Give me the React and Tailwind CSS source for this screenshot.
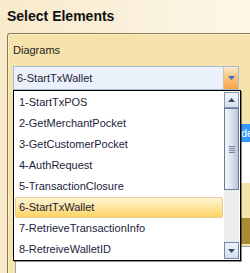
import React from "react";

const items = [
  "1-StartTxPOS",
  "2-GetMerchantPocket",
  "3-GetCustomerPocket",
  "4-AuthRequest",
  "5-TransactionClosure",
  "6-StartTxWallet",
  "7-RetrieveTransactionInfo",
  "8-RetreiveWalletID",
];

function Tri({ dir = "down", color }) {
  return (
    <svg width="7" height="4" viewBox="0 0 7 4">
      {dir === "down" ? (
        <polygon points="0,0 7,0 3.5,4" fill={color} />
      ) : (
        <polygon points="0,4 7,4 3.5,0" fill={color} />
      )}
    </svg>
  );
}

export default function App() {
  return (
    <div
      className="relative w-[250px] h-[273px] overflow-hidden bg-gradient-to-r from-[#f8eacb] to-[#fdf7e8] text-[#111]"
      style={{ fontFamily: '"Liberation Sans", Arial, sans-serif' }}
    >
      <div className="pt-2 pl-[7px] text-[14px] leading-[16px] font-bold text-[#111]">
        Select Elements
      </div>

      <div className="mt-[9px] ml-[7px] w-[260px] h-[260px] border-t border-l border-[#8d7d57] rounded-tl-[3px] bg-[#f5e3ab] shadow-[inset_1px_1px_0_#fbf0cc]">
        <div className="pt-[10px] pl-[5px] flex flex-col">
          <div className="text-[11px] leading-[13px] text-[#1e1e1e]">Diagrams</div>

          <div className="mt-[9px] w-[226px] h-[24px] flex border border-[#a8bed8] bg-[#eaf1fb]">
            <div className="flex-1 flex items-center pl-[3px] text-[11px] leading-[13px] text-[#1e1e38]">
              6-StartTxWallet
            </div>
            <div className="w-[15px] flex items-center justify-center border-l border-[#d9c39d] bg-gradient-to-b from-[#fbe8cc] via-[#f8c27c] to-[#f6a440]">
              <Tri dir="down" color="#3d6fc0" />
            </div>
          </div>

          <div className="mt-[34px] ml-[2px] h-[18px] bg-[#3399ff] flex items-center pl-[226px] text-[11px] leading-[13px] text-white">
            de
          </div>
          <div className="ml-[2px] h-[41px] bg-white" />
          <div className="h-[35px]" />
          <div className="ml-[2px] h-[26px] bg-[#a98b37]" />
          <div className="h-[2px]" />
          <div className="ml-[2px] h-[40px] bg-white border-t border-l border-[#a0a0a0]" />
        </div>
      </div>

      <div className="absolute left-[13px] top-[90px] w-[228px] h-[171px] border border-black bg-white shadow-[1px_1px_0_rgba(0,0,0,0.45)] overflow-hidden">
        <div className="flex h-full">
          <div className="w-[210px] pt-px flex flex-col">
            {items.map((t, i) =>
              i === 5 ? (
                <div
                  key={t}
                  className="h-[21px] mx-px flex items-center pl-[3px] border border-[#e3cd93] rounded-[2px] bg-gradient-to-b from-[#fef5d4] to-[#fdd35d] text-[11px] leading-[13px] text-[#1c1c3c] whitespace-nowrap"
                >
                  {t}
                </div>
              ) : (
                <div
                  key={t}
                  className="h-[21px] flex items-center pl-[5px] text-[11px] leading-[13px] text-[#1c1c3c] whitespace-nowrap"
                >
                  {t}
                </div>
              )
            )}
          </div>
          <div className="w-[15px] my-px flex flex-col bg-[#ededed]">
            <div className="h-[16px] flex items-center justify-center border border-[#8898b4] bg-gradient-to-b from-[#f2f6fb] to-[#d5e0ee]">
              <Tri dir="up" color="#3c4660" />
            </div>
            <div className="h-[82px] flex flex-col items-center justify-center gap-px border border-[#6a7b9c] bg-gradient-to-r from-[#f4f7fb] via-[#dbe3ee] to-[#b9c7da]">
              <div className="w-[6px] h-px bg-[#7a8496]" />
              <div className="w-[6px] h-px bg-[#7a8496]" />
              <div className="w-[6px] h-px bg-[#7a8496]" />
              <div className="w-[6px] h-px bg-[#7a8496]" />
            </div>
            <div className="flex-1" />
            <div className="h-[17px] flex items-center justify-center border border-[#7088b0] bg-gradient-to-b from-[#eef3fa] to-[#d3def0]">
              <Tri dir="down" color="#3c4660" />
            </div>
          </div>
        </div>
      </div>
    </div>
  );
}
